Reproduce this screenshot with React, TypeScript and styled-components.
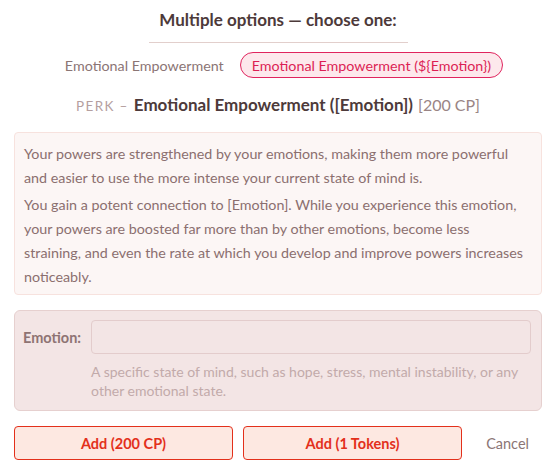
import React from 'react';
import styled, { createGlobalStyle } from 'styled-components';

const GlobalStyle = createGlobalStyle`
  html, body {
    margin: 0;
    padding: 0;
    background: #ffffff;
  }
  body {
    font-family: Lato, 'Noto Sans', sans-serif;
  }
  * { box-sizing: border-box; }
`;

const Dialog = styled.div`
  width: 557px;
  padding: 8px 15px 8px 14px;
  display: flex;
  flex-direction: column;
`;

const Title = styled.h2`
  margin: 0;
  text-align: center;
  font-size: 17px;
  font-weight: 700;
  color: #4d3a3a;
  line-height: 24px;
`;

const Divider = styled.hr`
  width: 259px;
  margin: 10px auto 0;
  border: none;
  border-top: 1px solid #e2cfcc;
`;

const Tabs = styled.div`
  display: flex;
  justify-content: center;
  align-items: center;
  gap: 4px;
  margin-top: 9px;
`;

const Tab = styled.button<{ $active?: boolean }>`
  font-family: inherit;
  font-size: 14.3px;
  height: 26px;
  padding: 0 11px;
  border-radius: 13px;
  cursor: pointer;
  background: ${({ $active }) => ($active ? '#fde8ec' : 'transparent')};
  border: 1px solid ${({ $active }) => ($active ? '#e0245e' : 'transparent')};
  color: ${({ $active }) => ($active ? '#dc1f55' : '#8b7575')};
`;

const PerkHeading = styled.div`
  display: flex;
  justify-content: center;
  align-items: baseline;
  gap: 5px;
  margin-top: 15px;
  line-height: 24px;
`;

const PerkKind = styled.span`
  font-size: 13.5px;
  letter-spacing: 0.1em;
  color: #b59f9f;
`;

const PerkName = styled.span`
  font-size: 17px;
  font-weight: 700;
  color: #4d3a3a;
`;

const PerkCost = styled.span`
  font-size: 16px;
  color: #9a8585;
`;

const Description = styled.div`
  margin-top: 14px;
  padding: 9px 16px 5px 9px;
  background: #fcf6f5;
  border: 1px solid #f7e2de;
  border-radius: 4px;
  font-size: 14.3px;
  line-height: 24px;
  color: #8b6f6f;

  p {
    margin: 0;
  }
  p + p {
    margin-top: 3px;
  }
`;

const FieldBox = styled.div`
  margin-top: 15px;
  padding: 9px 10px 10px 8px;
  background: #f3e5e5;
  border: 1px solid #e6d0cf;
  border-radius: 6px;
  display: grid;
  grid-template-columns: auto 1fr;
  column-gap: 10px;
  row-gap: 8px;
`;

const FieldLabel = styled.label`
  font-size: 14.5px;
  font-weight: 700;
  color: #8e7373;
  align-self: center;
`;

const FieldInput = styled.input`
  height: 34px;
  width: 100%;
  border: 1px solid #e3cccc;
  border-radius: 4px;
  background: #f3e5e5;
  font-family: inherit;
  font-size: 14px;
  outline: none;
`;

const FieldHint = styled.div`
  grid-column: 2;
  font-size: 14px;
  line-height: 19px;
  color: #c2aaaa;
`;

const Actions = styled.div`
  margin-top: 15px;
  display: flex;
  align-items: center;
  gap: 10px;
`;

const AddButton = styled.button`
  width: 219px;
  height: 34px;
  border: 1px solid #e3301b;
  border-radius: 4px;
  background: #fde8e1;
  color: #e3301b;
  font-family: inherit;
  font-size: 14.5px;
  font-weight: 700;
  cursor: pointer;
`;

const CancelButton = styled.button`
  margin-left: auto;
  margin-right: 13px;
  padding: 0;
  border: none;
  background: transparent;
  color: #8b7575;
  font-family: inherit;
  font-size: 14.5px;
  cursor: pointer;
`;

export default function App() {
  return (
    <>
      <GlobalStyle />
      <Dialog>
        <Title>Multiple options — choose one:</Title>
        <Divider />
        <Tabs>
          <Tab>Emotional Empowerment</Tab>
          <Tab $active>Emotional Empowerment (${'{'}Emotion{'}'})</Tab>
        </Tabs>
        <PerkHeading>
          <PerkKind>PERK –</PerkKind>
          <PerkName>Emotional Empowerment ([Emotion])</PerkName>
          <PerkCost>[200 CP]</PerkCost>
        </PerkHeading>
        <Description>
          <p>
            Your powers are strengthened by your emotions, making them more powerful and
            easier to use the more intense your current state of mind is.
          </p>
          <p>
            You gain a potent connection to [Emotion]. While you experience this emotion,
            your powers are boosted far more than by other emotions, become less straining,
            and even the rate at which you develop and improve powers increases noticeably.
          </p>
        </Description>
        <FieldBox>
          <FieldLabel htmlFor="emotion">Emotion:</FieldLabel>
          <FieldInput id="emotion" />
          <FieldHint>
            A specific state of mind, such as hope, stress, mental instability, or any
            other emotional state.
          </FieldHint>
        </FieldBox>
        <Actions>
          <AddButton>Add (200 CP)</AddButton>
          <AddButton>Add (1 Tokens)</AddButton>
          <CancelButton>Cancel</CancelButton>
        </Actions>
      </Dialog>
    </>
  );
}
